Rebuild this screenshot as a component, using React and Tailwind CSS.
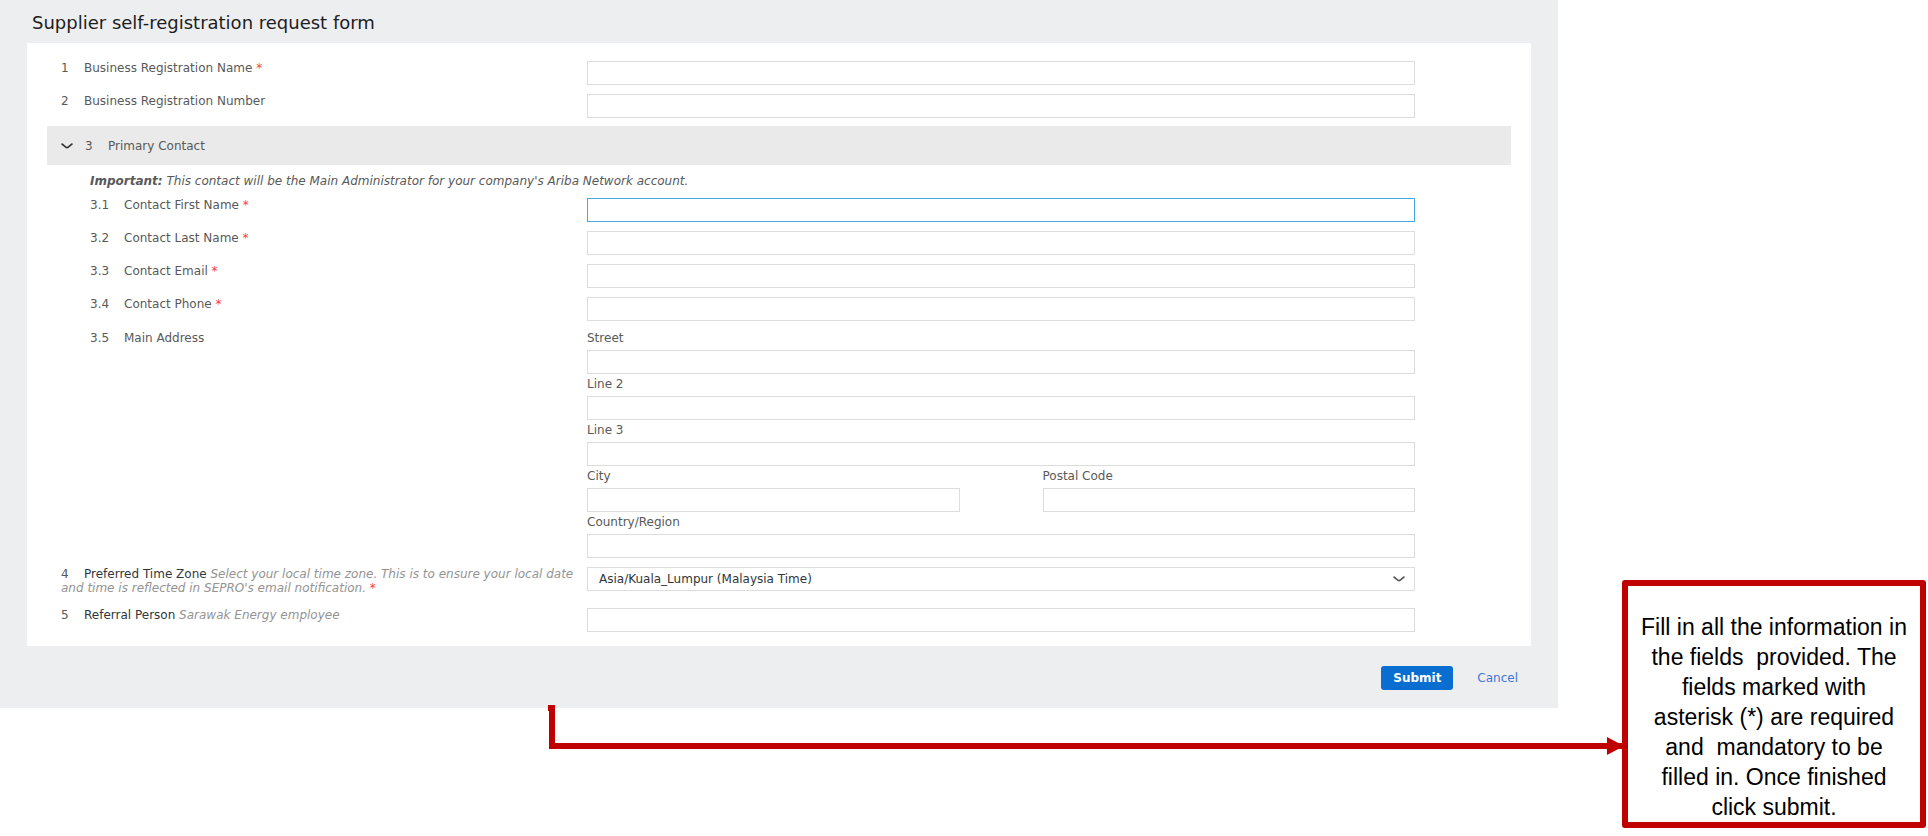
import { useState } from "react";

const inputClass =
  "block w-full h-6 px-[11px] bg-white border border-[#dcdcdc] outline-none text-[#32363a] focus:border-[#45aae4]";

function Chevron({ className }) {
  return (
    <svg className={className} width="12" height="6" viewBox="0 0 12 6" fill="none" stroke="currentColor" strokeWidth="1.6" aria-hidden="true">
      <path d="M0.5 0.8 C2.5 1.6 4.5 4.6 6 4.6 C7.5 4.6 9.5 1.6 11.5 0.8" />
    </svg>
  );
}

function Row({ id, number, label, hint, required, sub, dark, children }) {
  return (
    <div className="grid grid-cols-[540px_minmax(0,1fr)] pr-24">
      <label htmlFor={id} className={sub ? "block pl-[43px] pr-4" : "block pl-[14px] pr-2"}>
        <span className={sub ? "inline-block w-[34px]" : "inline-block w-[23px]"}>{number}</span>
        <span className={dark ? "text-[#32363a]" : ""}>{label}</span>
        {hint && <em className="text-[#949494]"> {hint}</em>}
        {required && <span className="text-[#ff3b3b]"> *</span>}
      </label>
      <div>{children}</div>
    </div>
  );
}

function AddressField({ id, label, value, onChange }) {
  return (
    <div>
      <label htmlFor={id} className="block pt-[3px] pb-[5px]">{label}</label>
      <input id={id} type="text" value={value} onChange={onChange} className={inputClass} />
    </div>
  );
}

const contactFields = [
  { id: "firstName", number: "3.1", label: "Contact First Name", active: true },
  { id: "lastName", number: "3.2", label: "Contact Last Name" },
  { id: "email", number: "3.3", label: "Contact Email" },
  { id: "phone", number: "3.4", label: "Contact Phone" },
];

export default function App() {
  const [form, setForm] = useState({});
  const [open, setOpen] = useState(true);

  const bind = (id) => ({
    id,
    value: form[id] || "",
    onChange: (e) => setForm((prev) => ({ ...prev, [id]: e.target.value })),
  });

  return (
    <main className="grid grid-cols-[minmax(0,1fr)_370px] bg-white">
      <div>
        <form
          onSubmit={(e) => e.preventDefault()}
          className="bg-[#edeef0] pl-[27px] pr-[27px] pb-[18px] text-[12px] leading-[14px] text-[#595959] font-['DejaVu_Sans',sans-serif]"
        >
          <h1 className="h-[43px] pl-[5px] pt-[11px] text-[18px] leading-6 text-[#1d1d1d]">
            Supplier self-registration request form
          </h1>

          <div className="bg-white px-5 pt-[18px] pb-[14px]">
            <div className="flex flex-col gap-[9px]">
              <Row id="bizName" number="1" label="Business Registration Name" required>
                <input type="text" {...bind("bizName")} className={inputClass} />
              </Row>
              <Row id="bizNumber" number="2" label="Business Registration Number">
                <input type="text" {...bind("bizNumber")} className={inputClass} />
              </Row>
            </div>

            <button
              type="button"
              aria-expanded={open}
              onClick={() => setOpen(!open)}
              className="mt-2 flex h-[39px] w-full items-center bg-[#eaeaea] pl-[14px] text-left"
            >
              <Chevron className="mr-3 text-[#333]" />
              <span className="w-[23px]">3</span>
              <span>Primary Contact</span>
            </button>

            {open && (
              <div>
                <p className="pl-[43px] pt-[9px] pb-[10px] italic">
                  <strong>Important:</strong> This contact will be the Main Administrator for your company's Ariba Network account.
                </p>
                <div className="flex flex-col gap-[9px]">
                  {contactFields.map((f) => (
                    <Row key={f.id} id={f.id} number={f.number} label={f.label} required sub>
                      <input
                        type="text"
                        {...bind(f.id)}
                        className={f.active ? `${inputClass} border-[#45aae4]!` : inputClass}
                      />
                    </Row>
                  ))}
                </div>
                <div className="mt-[7px] grid grid-cols-[540px_minmax(0,1fr)] pr-24">
                  <div className="pl-[43px] pt-[3px]">
                    <span className="inline-block w-[34px]">3.5</span>
                    <span>Main Address</span>
                  </div>
                  <div>
                    <AddressField label="Street" {...bind("street")} />
                    <AddressField label="Line 2" {...bind("line2")} />
                    <AddressField label="Line 3" {...bind("line3")} />
                    <div className="grid grid-cols-2 gap-[83px]">
                      <AddressField label="City" {...bind("city")} />
                      <AddressField label="Postal Code" {...bind("postal")} />
                    </div>
                    <AddressField label="Country/Region" {...bind("country")} />
                  </div>
                </div>
              </div>
            )}

            <div className="mt-[9px] flex flex-col gap-[13px]">
              <Row
                id="timeZone"
                number="4"
                label="Preferred Time Zone"
                hint="Select your local time zone. This is to ensure your local date and time is reflected in SEPRO's email notification."
                required
                dark
              >
                <div className="relative">
                  <select id="timeZone" className={`${inputClass} appearance-none`}>
                    <option>Asia/Kuala_Lumpur (Malaysia Time)</option>
                  </select>
                  <Chevron className="pointer-events-none absolute right-[10px] top-[9px] text-[#555]" />
                </div>
              </Row>
              <Row id="referral" number="5" label="Referral Person" hint="Sarawak Energy employee" dark>
                <input type="text" {...bind("referral")} className={inputClass} />
              </Row>
            </div>
          </div>

          <div className="flex items-center justify-end gap-6 pt-5 pr-[13px]">
            <button type="submit" className="h-6 w-[72px] rounded-[3px] bg-[#0a6ed1] font-bold text-white">
              Submit
            </button>
            <a href="#cancel" className="text-[#3f78d8]">Cancel</a>
          </div>
        </form>

        {/* connector from the form to the note */}
        <div className="relative -mt-[3px] -mr-16 ml-[549px] h-11 border-b-[6px] border-l-[6px] border-[#c00000]">
          <span className="absolute -left-[7px] top-0 h-[6px] w-[7px] bg-[#c00000]" />
          <svg className="absolute -right-0.5 -bottom-3" width="17" height="18" viewBox="0 0 17 18" fill="#c00000" aria-hidden="true">
            <path d="M0 0 L17 9 L0 18 Z" />
          </svg>
        </div>
      </div>

      <aside className="ml-16 mr-0.5 mt-[580px] rounded-[3px] border-[6px] border-[#c00000] pt-[26px] text-center text-[23px] leading-[30px] text-black whitespace-pre font-['Liberation_Sans',sans-serif]">
        <p>
          Fill in all the information in<br />
          the fields  provided. The<br />
          fields marked with<br />
          asterisk (*) are required<br />
          and  mandatory to be<br />
          filled in. Once finished<br />
          click submit.
        </p>
      </aside>
    </main>
  );
}
